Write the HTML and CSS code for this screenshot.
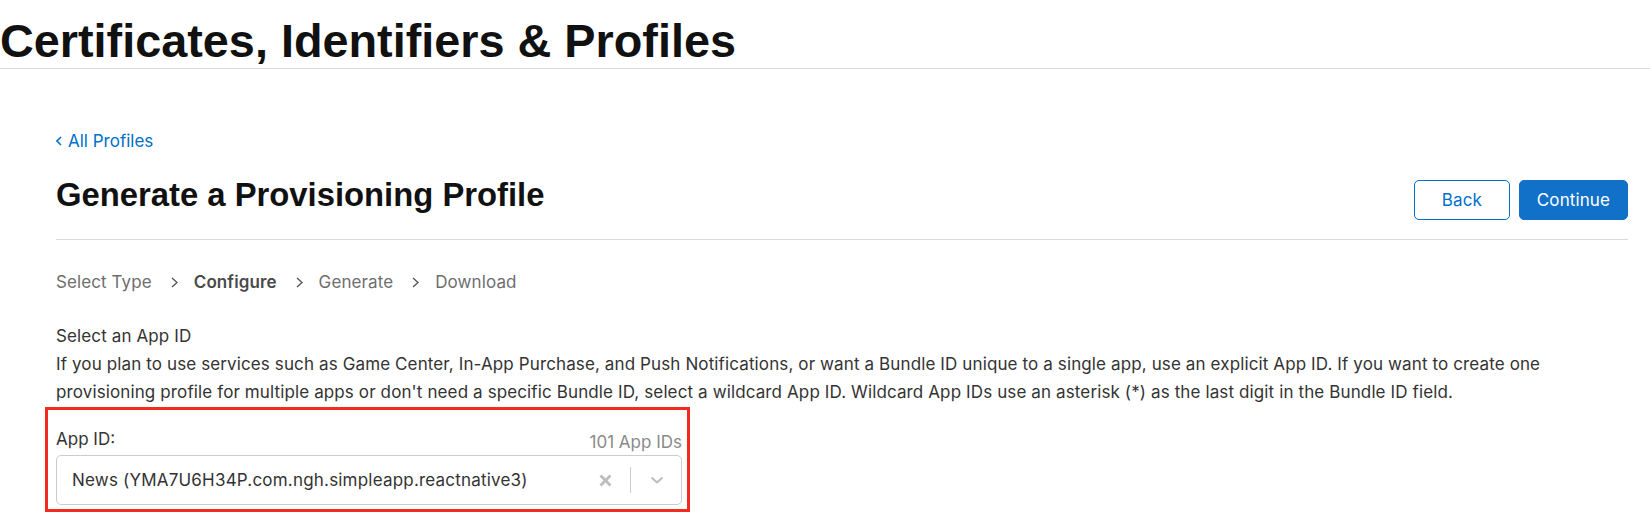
FILE: index.html
```html
<!DOCTYPE html>
<html lang="en">
<head>
<meta charset="utf-8">
<title>Certificates, Identifiers &amp; Profiles</title>
<link rel="stylesheet" href="styles.css">
</head>
<body>
<header class="site-header">
  <h1 class="site-title">Certificates, Identifiers &amp; Profiles</h1>
</header>
<main class="main">
  <div class="back-row">
    <a class="back-link" href="#">
      <svg class="back-chevron" viewBox="0 0 6 10" aria-hidden="true"><polyline points="5,1 1,5 5,9"/></svg>
      <span>All Profiles</span>
    </a>
  </div>
  <div class="page-head">
    <h2 class="page-title">Generate a Provisioning Profile</h2>
    <div class="actions">
      <button class="btn btn-secondary" type="button">Back</button>
      <button class="btn btn-primary" type="button">Continue</button>
    </div>
  </div>
  <nav class="steps">
    <span class="step">Select Type</span>
    <svg class="step-sep" viewBox="0 0 7 11" aria-hidden="true"><polyline points="1,1 6,5.5 1,10"/></svg>
    <span class="step step-current">Configure</span>
    <svg class="step-sep" viewBox="0 0 7 11" aria-hidden="true"><polyline points="1,1 6,5.5 1,10"/></svg>
    <span class="step">Generate</span>
    <svg class="step-sep" viewBox="0 0 7 11" aria-hidden="true"><polyline points="1,1 6,5.5 1,10"/></svg>
    <span class="step">Download</span>
  </nav>
  <section class="intro">
    <p class="intro-title">Select an App ID</p>
    <p class="intro-text">If you plan to use services such as Game Center, In-App Purchase, and Push Notifications, or want a Bundle ID unique to a single app, use an explicit App ID. If you want to create one provisioning profile for multiple apps or don't need a specific Bundle ID, select a wildcard App ID. Wildcard App IDs use an asterisk (*) as the last digit in the Bundle ID field.</p>
  </section>
  <div class="highlight">
    <div class="field-head">
      <span class="field-label">App ID:</span>
      <span class="field-count">101 App IDs</span>
    </div>
    <div class="select">
      <span class="select-value">News (YMA7U6H34P.com.ngh.simpleapp.reactnative3)</span>
      <svg class="select-clear" viewBox="0 0 13 13" aria-hidden="true"><line x1="1.5" y1="1.5" x2="11.5" y2="11.5"/><line x1="11.5" y1="1.5" x2="1.5" y2="11.5"/></svg>
      <span class="select-sep"></span>
      <svg class="select-arrow" viewBox="0 0 14 8" aria-hidden="true"><polyline points="1.5,1.5 7,6.5 12.5,1.5"/></svg>
    </div>
  </div>
</main>
</body>
</html>
```

FILE: styles.css
```css
html, body {
  margin: 0;
  padding: 0;
  background: #ffffff;
}

body {
  font-family: Inter, "Noto Sans", sans-serif;
  color: #333333;
}

.site-header {
  border-bottom: 1px solid #d9d9d9;
}

.site-title {
  margin: 0;
  padding: 18px 0 4px 0;
  font-family: "Liberation Sans", Arial, sans-serif;
  font-weight: 700;
  font-size: 46.8px;
  line-height: 46px;
  color: #111111;
}

.main {
  padding: 60px 22px 0 56px;
}

.back-row {
  height: 24px;
}

.back-link {
  display: inline-flex;
  align-items: center;
  gap: 6px;
  height: 24px;
  font-size: 17px;
  line-height: 24px;
  color: #0070c9;
  text-decoration: none;
}

.back-chevron {
  width: 6px;
  height: 10px;
  fill: none;
  stroke: #0070c9;
  stroke-width: 1.6;
}

.page-head {
  display: flex;
  justify-content: space-between;
  align-items: flex-start;
  margin-top: 22px;
  padding-bottom: 19px;
  border-bottom: 1px solid #d9d9d9;
}

.page-title {
  margin: 0;
  font-family: "Liberation Sans", Arial, sans-serif;
  font-weight: 700;
  font-size: 32.8px;
  line-height: 40px;
  color: #111111;
}

.actions {
  display: flex;
  gap: 9px;
  margin-top: 5px;
}

.btn {
  box-sizing: border-box;
  height: 40px;
  min-width: 96px;
  padding: 0 17px;
  border-radius: 5px;
  font-family: Inter, "Noto Sans", sans-serif;
  font-size: 17px;
  letter-spacing: 0.1px;
  cursor: pointer;
}

.btn-secondary {
  background: #ffffff;
  border: 1px solid #0070c9;
  color: #0070c9;
}

.btn-primary {
  background: #1170c8;
  border: 1px solid #1170c8;
  color: #ffffff;
}

.steps {
  display: flex;
  align-items: center;
  margin-top: 30px;
  height: 24px;
  font-size: 17px;
  line-height: 24px;
  letter-spacing: 0.1px;
  color: #6e6e6e;
}

.step-current {
  font-weight: 600;
  color: #4a4a4a;
}

.step-sep {
  width: 7px;
  height: 11px;
  margin: 0 16px 0 19px;
  fill: none;
  stroke: #555555;
  stroke-width: 1.4;
}

.intro {
  margin-top: 28px;
  font-size: 17px;
  line-height: 28px;
  letter-spacing: 0.12px;
  color: #333333;
}

.intro-title,
.intro-text {
  margin: 0;
}

.intro-text {
  max-width: 1550px;
}

.highlight {
  box-sizing: border-box;
  width: 645px;
  margin: 1px 0 0 -11px;
  padding: 17px 5px 4px 8px;
  border: 3px solid #f32b1f;
}

.field-head {
  display: flex;
  justify-content: space-between;
  align-items: flex-start;
  font-size: 17px;
  line-height: 24px;
}

.field-label {
  color: #333333;
}

.field-count {
  margin-top: 3px;
  color: #8a8a8a;
}

.select {
  box-sizing: border-box;
  display: flex;
  align-items: center;
  height: 50px;
  margin-top: 1px;
  padding: 0 17px 0 15px;
  border: 1px solid #cccccc;
  border-radius: 5px;
}

.select-value {
  flex: 1;
  font-size: 17px;
  letter-spacing: 0.2px;
  color: #333333;
}

.select-clear {
  width: 13px;
  height: 13px;
  margin-right: 18px;
  stroke: #bdbdbd;
  stroke-width: 2.8;
}

.select-sep {
  width: 1px;
  height: 26px;
  margin-right: 19px;
  background: #cccccc;
}

.select-arrow {
  width: 14px;
  height: 8px;
  fill: none;
  stroke: #bdbdbd;
  stroke-width: 2;
}
```
